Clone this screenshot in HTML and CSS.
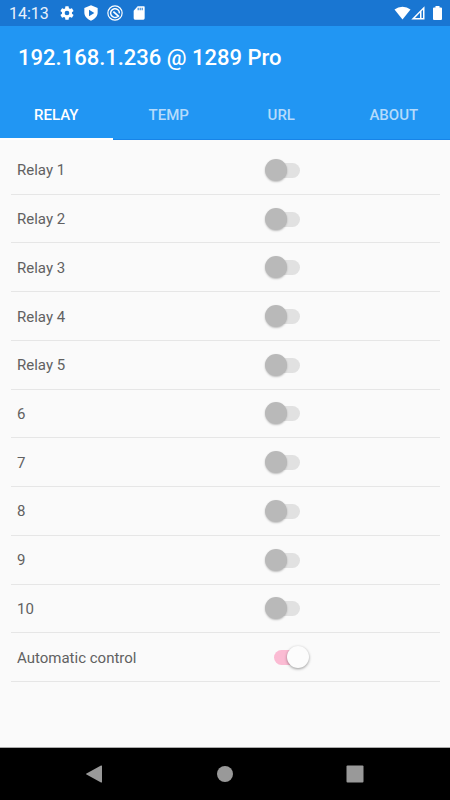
FILE: index.html
```html
<!DOCTYPE html>
<html lang="en">
<head>
<meta charset="utf-8">
<meta name="viewport" content="width=device-width, initial-scale=1">
<title>192.168.1.236 @ 1289 Pro</title>
<link rel="stylesheet" href="styles.css">
</head>
<body>
<div class="status">
  <span class="clock">14:13</span>
  <div class="notices">
    <svg class="icon" viewBox="0 0 24 24"><path fill-rule="evenodd" d="M19.4 13a7.600 7.600 0 0 0 0-2l2.100-1.650a.5.500 0 0 0 .12-.64l-2-3.460a.5.500 0 0 0-.61-.22l-2.490 1a7.300 7.300 0 0 0-1.690-.98l-.38-2.650A.49.490 0 0 0 14 2h-4a.49.490 0 0 0-.49.420l-.38 2.650a7.700 7.700 0 0 0-1.690.98l-2.490-1a.49.490 0 0 0-.61.220l-2 3.460a.49.490 0 0 0 .12.640L4.570 11a7.900 7.900 0 0 0 0 2l-2.110 1.650a.5.500 0 0 0-.12.640l2 3.460c.12.220.39.300.61.220l2.490-1c.52.400 1.080.730 1.690.98l.38 2.650c.03.240.24.400.49.400h4c.25 0 .46-.18.490-.4l.38-2.650a7.700 7.700 0 0 0 1.690-.98l2.490 1c.23.090.49 0 .61-.22l2-3.460a.5.500 0 0 0-.12-.64L19.400 13zM12 15.500a3.500 3.500 0 1 1 0-7 3.500 3.500 0 0 1 0 7z"/></svg>
    <svg class="icon" viewBox="0 0 24 24"><path fill-rule="evenodd" d="M12 .5L2 4.500V11c0 5.600 4 10.600 10 12.500 6-1.900 10-6.900 10-12.500V4.500zM9 7l8 5-8 5z"/></svg>
    <svg class="icon" viewBox="0 0 24 24"><g fill="none" stroke="#fff"><circle cx="12" cy="12" r="10.700" stroke-width="1.800"/><path d="M16.200 17.200A6.600 6.600 0 1 1 18.600 12.500" stroke-width="2.200"/><path d="M9.500 9.800L18 17.500" stroke-width="2.600"/></g></svg>
    <svg class="icon" viewBox="0 0 24 24"><path fill-rule="evenodd" d="M19.500 2H10L4 8.500V20a2 2 0 0 0 2 2h12.500a2 2 0 0 0 2-2V3a1 1 0 0 0-1-1zM10 4h1.500v4H10zm3 0h1.500v4H13zm3 0h1.500v4H16z"/></svg>
  </div>
  <div class="signals">
    <svg class="wifi" viewBox="0 0 17 14"><path d="M8.500 13.500L.5 3.600Q4 .7 8.500.7t8 2.900z"/></svg>
    <svg class="cell" viewBox="0 0 14 14"><path fill-rule="evenodd" d="M13.500.3v13.200H.3zM9 6.800L4 12h5zM10.500 5.300V12H12V3.800z"/></svg>
    <svg class="battery" viewBox="0 0 9 14"><path d="M2.500 0h4v1.500H8q1 0 1 1V13q0 1-1 1H1q-1 0-1-1V2.500q0-1 1-1h1.500z"/></svg>
  </div>
</div>
<header class="appbar">
  <h1>192.168.1.236 @ 1289 Pro</h1>
  <nav class="tabs">
    <button class="tab selected" type="button">RELAY</button>
    <button class="tab" type="button">TEMP</button>
    <button class="tab" type="button">URL</button>
    <button class="tab" type="button">ABOUT</button>
  </nav>
</header>
<main>
  <ul class="list">
    <li><label for="r1">Relay 1</label><input id="r1" type="checkbox"></li>
    <li><label for="r2">Relay 2</label><input id="r2" type="checkbox"></li>
    <li><label for="r3">Relay 3</label><input id="r3" type="checkbox"></li>
    <li><label for="r4">Relay 4</label><input id="r4" type="checkbox"></li>
    <li><label for="r5">Relay 5</label><input id="r5" type="checkbox"></li>
    <li><label for="r6">6</label><input id="r6" type="checkbox"></li>
    <li><label for="r7">7</label><input id="r7" type="checkbox"></li>
    <li><label for="r8">8</label><input id="r8" type="checkbox"></li>
    <li><label for="r9">9</label><input id="r9" type="checkbox"></li>
    <li><label for="r10">10</label><input id="r10" type="checkbox"></li>
    <li><label for="auto">Automatic control</label><input id="auto" type="checkbox" checked></li>
  </ul>
</main>
<footer class="navbar">
  <button type="button" aria-label="Back"><svg viewBox="0 0 18 18"><path d="M15 .5q1-.4 1 .6v15.800q0 1-1 .6L.5 9.500q-1-.5 0-1z"/></svg></button>
  <button type="button" aria-label="Home"><svg viewBox="0 0 18 18"><circle cx="9" cy="9" r="8"/></svg></button>
  <button type="button" aria-label="Recent apps"><svg viewBox="0 0 18 18"><rect x=".5" y=".5" width="17" height="17" rx="1"/></svg></button>
</footer>
</body>
</html>
```
FILE: styles.css
```css
* {
  box-sizing: border-box;
}

body {
  margin: 0;
  min-height: 100vh;
  display: flex;
  flex-direction: column;
  background: #fafafa;
  color: #616161;
  font: 15px/20px Roboto, sans-serif;
}

button {
  border: 0;
  padding: 0;
  background: none;
  font: inherit;
}

svg {
  display: block;
  fill: #fff;
}

.status {
  display: flex;
  align-items: center;
  height: 26px;
  padding: 0 8px 0 9px;
  background: #1976d2;
  color: #e8f1fb;
}

.clock {
  padding-top: 2px;
  font-size: 16px;
}

.notices {
  display: flex;
  gap: 8px;
  margin-left: 10px;
}

.icon {
  width: 16px;
  height: 16px;
}

.signals {
  display: flex;
  align-items: center;
  margin-left: auto;
}

.wifi {
  width: 17px;
  height: 14px;
}

.cell {
  width: 14px;
  height: 14px;
}

.battery {
  width: 9px;
  height: 14px;
  margin-left: 8px;
}

.appbar {
  background: #2196f3;
}

h1 {
  margin: 0;
  padding: 0 18px;
  color: #fff;
  font-size: 22px;
  font-weight: 500;
  line-height: 64px;
}

.tabs {
  display: grid;
  grid-template-columns: repeat(4, 1fr);
}

.tab {
  height: 50px;
  box-shadow: inset 0 -1px #1784e8;
  color: #b5dbfb;
  font-weight: 500;
}

.tab.selected {
  box-shadow: inset 0 -2px #fff;
  color: #fff;
}

main {
  flex: 1;
  padding: 6px 10px 24px 11px;
}

.list {
  display: grid;
  grid-auto-rows: 1fr;
  min-height: 536px;
  margin: 0;
  padding: 0;
  list-style: none;
}

.list li {
  display: grid;
  grid-template-columns: 59% 1fr;
  align-items: center;
  border-bottom: 1px solid #e6e6e6;
}

.list label {
  padding: 1px 0 0 6px;
}

.list input {
  position: relative;
  width: 44px;
  height: 22px;
  margin: 0 1px;
  appearance: none;
}

.list input::before {
  content: "";
  position: absolute;
  inset: 4px 9px 3px;
  border-radius: 8px;
  background: #e1e1e1;
}

.list input::after {
  content: "";
  position: absolute;
  top: 0;
  left: 0;
  width: 22px;
  height: 22px;
  border-radius: 50%;
  background: #b9b9b9;
  box-shadow: 0 1px 2px rgba(0, 0, 0, 0.25);
}

.list input:checked::before {
  background: #fbbbd3;
}

.list input:checked::after {
  left: 22px;
  background: #fcfcfc;
  box-shadow: 0 1px 3px rgba(0, 0, 0, 0.4);
}

.navbar {
  display: flex;
  justify-content: center;
  gap: 82px;
  height: 53px;
  border-top: 1px solid #aaa;
  background: #000;
}

.navbar button {
  display: grid;
  place-items: center;
  width: 48px;
}

.navbar svg {
  width: 18px;
  height: 18px;
  fill: #999;
}
```
